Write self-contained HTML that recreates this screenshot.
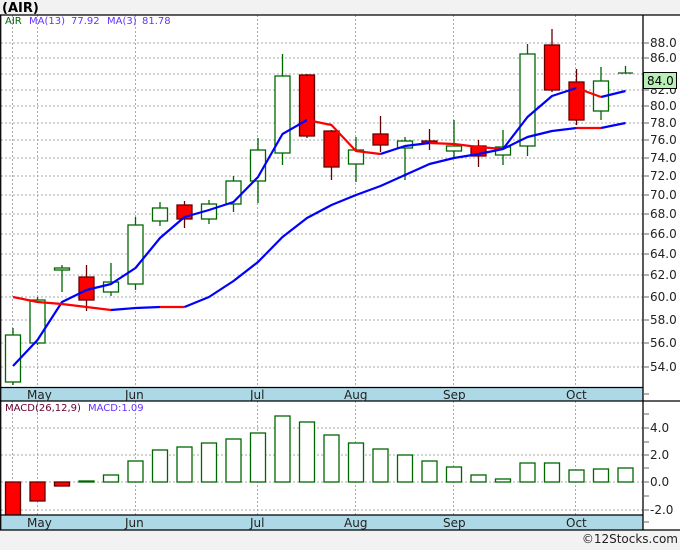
<!DOCTYPE html><html><head><style>body{margin:0;background:#f2f2f2;width:680px;height:546px;overflow:hidden;font-family:"DejaVu Sans","Liberation Sans",sans-serif}</style></head><body>
<svg width="680" height="546" xmlns="http://www.w3.org/2000/svg" font-family="DejaVu Sans, Liberation Sans, sans-serif">
<rect x="0" y="0" width="680" height="546" fill="#f2f2f2"/>
<text x="2" y="12" font-size="13" font-weight="bold" fill="#000">(AIR)</text>
<rect x="1" y="15" width="679" height="515" fill="#fff"/>
<g stroke="#aaa" stroke-width="1" stroke-dasharray="2,2">
<path d="M1 43H643M1 58H643M1 74H643M1 90H643M1 106H643M1 123H643M1 140H643M1 158H643M1 176H643M1 195H643M1 214H643M1 234H643M1 254H643M1 275H643M1 297H643M1 320H643M1 343H643M1 367H643"/>
<path d="M12.5 15V387M37.5 15V387M135.5 15V387M257.5 15V387M355.5 15V387M453.5 15V387M575.5 15V387"/>
<path d="M1 428H643M1 455H643M1 482H643M1 510H643"/>
<path d="M12.5 401V515M37.5 401V515M135.5 401V515M257.5 401V515M355.5 401V515M453.5 401V515M575.5 401V515"/>
</g>
<text x="5" y="24" font-size="10" fill="#006600">AIR</text>
<g font-size="10" fill="#6633ff"><text x="29" y="24">MA(13)</text><text x="71" y="24">77.92</text><text x="107" y="24">MA(3)</text><text x="142" y="24">81.78</text></g>
<g stroke-width="1.3">
<g stroke="#006600" fill="#fff">
<path d="M13 328V385M37.5 297V345M62 265V292M111 263V296M135.5 217V290M160 202V226M209 200V224M233.5 176V212M258 138V203M282.5 54V165M356 137V182M405 137V180M454 120V158M503 130V165M527.5 44V156M601 67V120M625.5 66V73M618 73H633"/>
<rect x="5.5" y="335" width="15" height="47"/><rect x="30" y="300" width="15" height="43"/><rect x="54.5" y="268" width="15" height="2"/><rect x="103.5" y="282" width="15" height="10"/><rect x="128" y="225" width="15" height="59"/><rect x="152.5" y="208" width="15" height="13"/><rect x="201.5" y="204" width="15" height="15"/><rect x="226" y="181" width="15" height="23"/><rect x="250.5" y="150" width="15" height="31"/><rect x="275" y="76" width="15" height="77"/><rect x="348.5" y="150" width="15" height="14"/><rect x="397.5" y="141" width="15" height="7"/><rect x="446.5" y="146" width="15" height="5"/><rect x="495.5" y="147" width="15" height="8"/><rect x="520" y="54" width="15" height="92"/><rect x="593.5" y="81" width="15" height="30"/>
</g>
<g stroke="#660000" fill="#ff0000">
<path d="M86.5 265V311M184.5 201V228M307 74V138M331.5 130V180M380.5 116V152M429.5 129V150M478.5 140V167M552 29V92M576.5 69V125"/>
<rect x="79" y="277" width="15" height="23"/><rect x="177" y="205" width="15" height="14"/><rect x="299.5" y="75" width="15" height="61"/><rect x="324" y="131" width="15" height="36"/><rect x="373" y="134" width="15" height="11"/><rect x="422" y="141" width="15" height="2"/><rect x="471" y="146" width="15" height="10"/><rect x="544.5" y="45" width="15" height="45"/><rect x="569" y="82" width="15" height="38"/>
</g>
</g>
<g fill="none" stroke-width="2.2" stroke-linejoin="round">
<polyline stroke="#0000ff" points="13,366 37.5,340 62,302 86.5,290 111,284 135.5,268 160,238 184.5,217 209,210 233.5,202 258,177 282.5,134 307,120"/>
<polyline stroke="#ff0000" points="307,120 331.5,125 356,151 380.5,154"/>
<polyline stroke="#0000ff" points="380.5,154 405,146 429.5,143"/>
<polyline stroke="#ff0000" points="429.5,143 454,144 478.5,147 503,149"/>
<polyline stroke="#0000ff" points="503,149 527.5,117 552,96 576.5,88"/>
<polyline stroke="#ff0000" points="576.5,88 601,97"/>
<polyline stroke="#0000ff" points="601,97 625.5,91"/>
<polyline stroke="#ff0000" points="13,297 37.5,302 62,304 86.5,307 111,310"/>
<polyline stroke="#0000ff" points="111,310 135.5,308 160,307"/>
<polyline stroke="#ff0000" points="160,307 184.5,307"/>
<polyline stroke="#0000ff" points="184.5,307 209,297 233.5,281 258,262 282.5,237 307,218 331.5,205 356,195 380.5,186 405,175 429.5,164 454,158 478.5,154 503,149 527.5,137 552,131 576.5,128"/>
<polyline stroke="#ff0000" points="576.5,128 601,128"/>
<polyline stroke="#0000ff" points="601,128 625.5,123"/>
</g>
<text x="5" y="411" font-size="10" fill="#660033">MACD(26,12,9)</text>
<text x="88" y="411" font-size="10" fill="#6633ff">MACD:1.09</text>
<g stroke-width="1.3">
<g stroke="#660000" fill="#ff0000"><rect x="5.5" y="482" width="15" height="33"/><rect x="30" y="482" width="15" height="19"/><rect x="54.5" y="482" width="15" height="4"/></g>
<g stroke="#006600" fill="#fff">
<rect x="79" y="481" width="15" height="1"/><rect x="103.5" y="475" width="15" height="7"/><rect x="128" y="461" width="15" height="21"/><rect x="152.5" y="450" width="15" height="32"/><rect x="177" y="447" width="15" height="35"/><rect x="201.5" y="443" width="15" height="39"/><rect x="226" y="439" width="15" height="43"/><rect x="250.5" y="433" width="15" height="49"/><rect x="275" y="416" width="15" height="66"/><rect x="299.5" y="422" width="15" height="60"/><rect x="324" y="435" width="15" height="47"/><rect x="348.5" y="443" width="15" height="39"/><rect x="373" y="449" width="15" height="33"/><rect x="397.5" y="455" width="15" height="27"/><rect x="422" y="461" width="15" height="21"/><rect x="446.5" y="467" width="15" height="15"/><rect x="471" y="475" width="15" height="7"/><rect x="495.5" y="479" width="15" height="3"/><rect x="520" y="463" width="15" height="19"/><rect x="544.5" y="463" width="15" height="19"/><rect x="569" y="470" width="15" height="12"/><rect x="593.5" y="469" width="15" height="13"/><rect x="618" y="468" width="15" height="14"/>
</g></g>
<rect x="1" y="387" width="642" height="14" fill="#add8e6"/>
<rect x="1" y="515" width="642" height="15" fill="#add8e6"/>
<g stroke="#000" stroke-width="1.3"><path d="M0 15H680M0 387.5H643M0 401H680M0 515H643M0 530H680M0.7 15V530M643 15V530"/></g>
<g font-size="12" fill="#222">
<text x="27" y="399">May</text><text x="125" y="399">Jun</text><text x="250" y="399">Jul</text><text x="344" y="399">Aug</text><text x="443" y="399">Sep</text><text x="566" y="399">Oct</text>
<text x="27" y="527">May</text><text x="125" y="527">Jun</text><text x="250" y="527">Jul</text><text x="344" y="527">Aug</text><text x="443" y="527">Sep</text><text x="566" y="527">Oct</text>
</g>
<g stroke="#666" stroke-width="1"><path d="M643 43H649M643 58H649M643 90H649M643 106H649M643 123H649M643 140H649M643 158H649M643 176H649M643 195H649M643 214H649M643 234H649M643 254H649M643 275H649M643 297H649M643 320H649M643 343H649M643 367H649M643 428H649M643 455H649M643 482H649M643 510H649M643 394H649M643 522H649M643 414H649M643 442H649M643 468H649M643 496H649"/></g>
<g font-size="12" fill="#222">
<text x="650" y="47">88.0</text><text x="650" y="62">86.0</text><text x="650" y="94">82.0</text><text x="650" y="110">80.0</text><text x="650" y="127">78.0</text><text x="650" y="144">76.0</text><text x="650" y="162">74.0</text><text x="650" y="180">72.0</text><text x="650" y="199">70.0</text><text x="650" y="218">68.0</text><text x="650" y="238">66.0</text><text x="650" y="258">64.0</text><text x="650" y="279">62.0</text><text x="650" y="301">60.0</text><text x="650" y="324">58.0</text><text x="650" y="347">56.0</text><text x="650" y="371">54.0</text>
<text x="650" y="432">4.0</text><text x="650" y="459">2.0</text><text x="650" y="486">0.0</text><text x="650" y="514">-2.0</text>
</g>
<rect x="643.5" y="72.5" width="33" height="16" fill="#b8f0b8" stroke="#000"/>
<text x="647" y="85" font-size="12" fill="#000">84.0</text>
<text x="678" y="543" font-size="12" fill="#222" text-anchor="end">©12Stocks.com</text>
</svg>
</body></html>
